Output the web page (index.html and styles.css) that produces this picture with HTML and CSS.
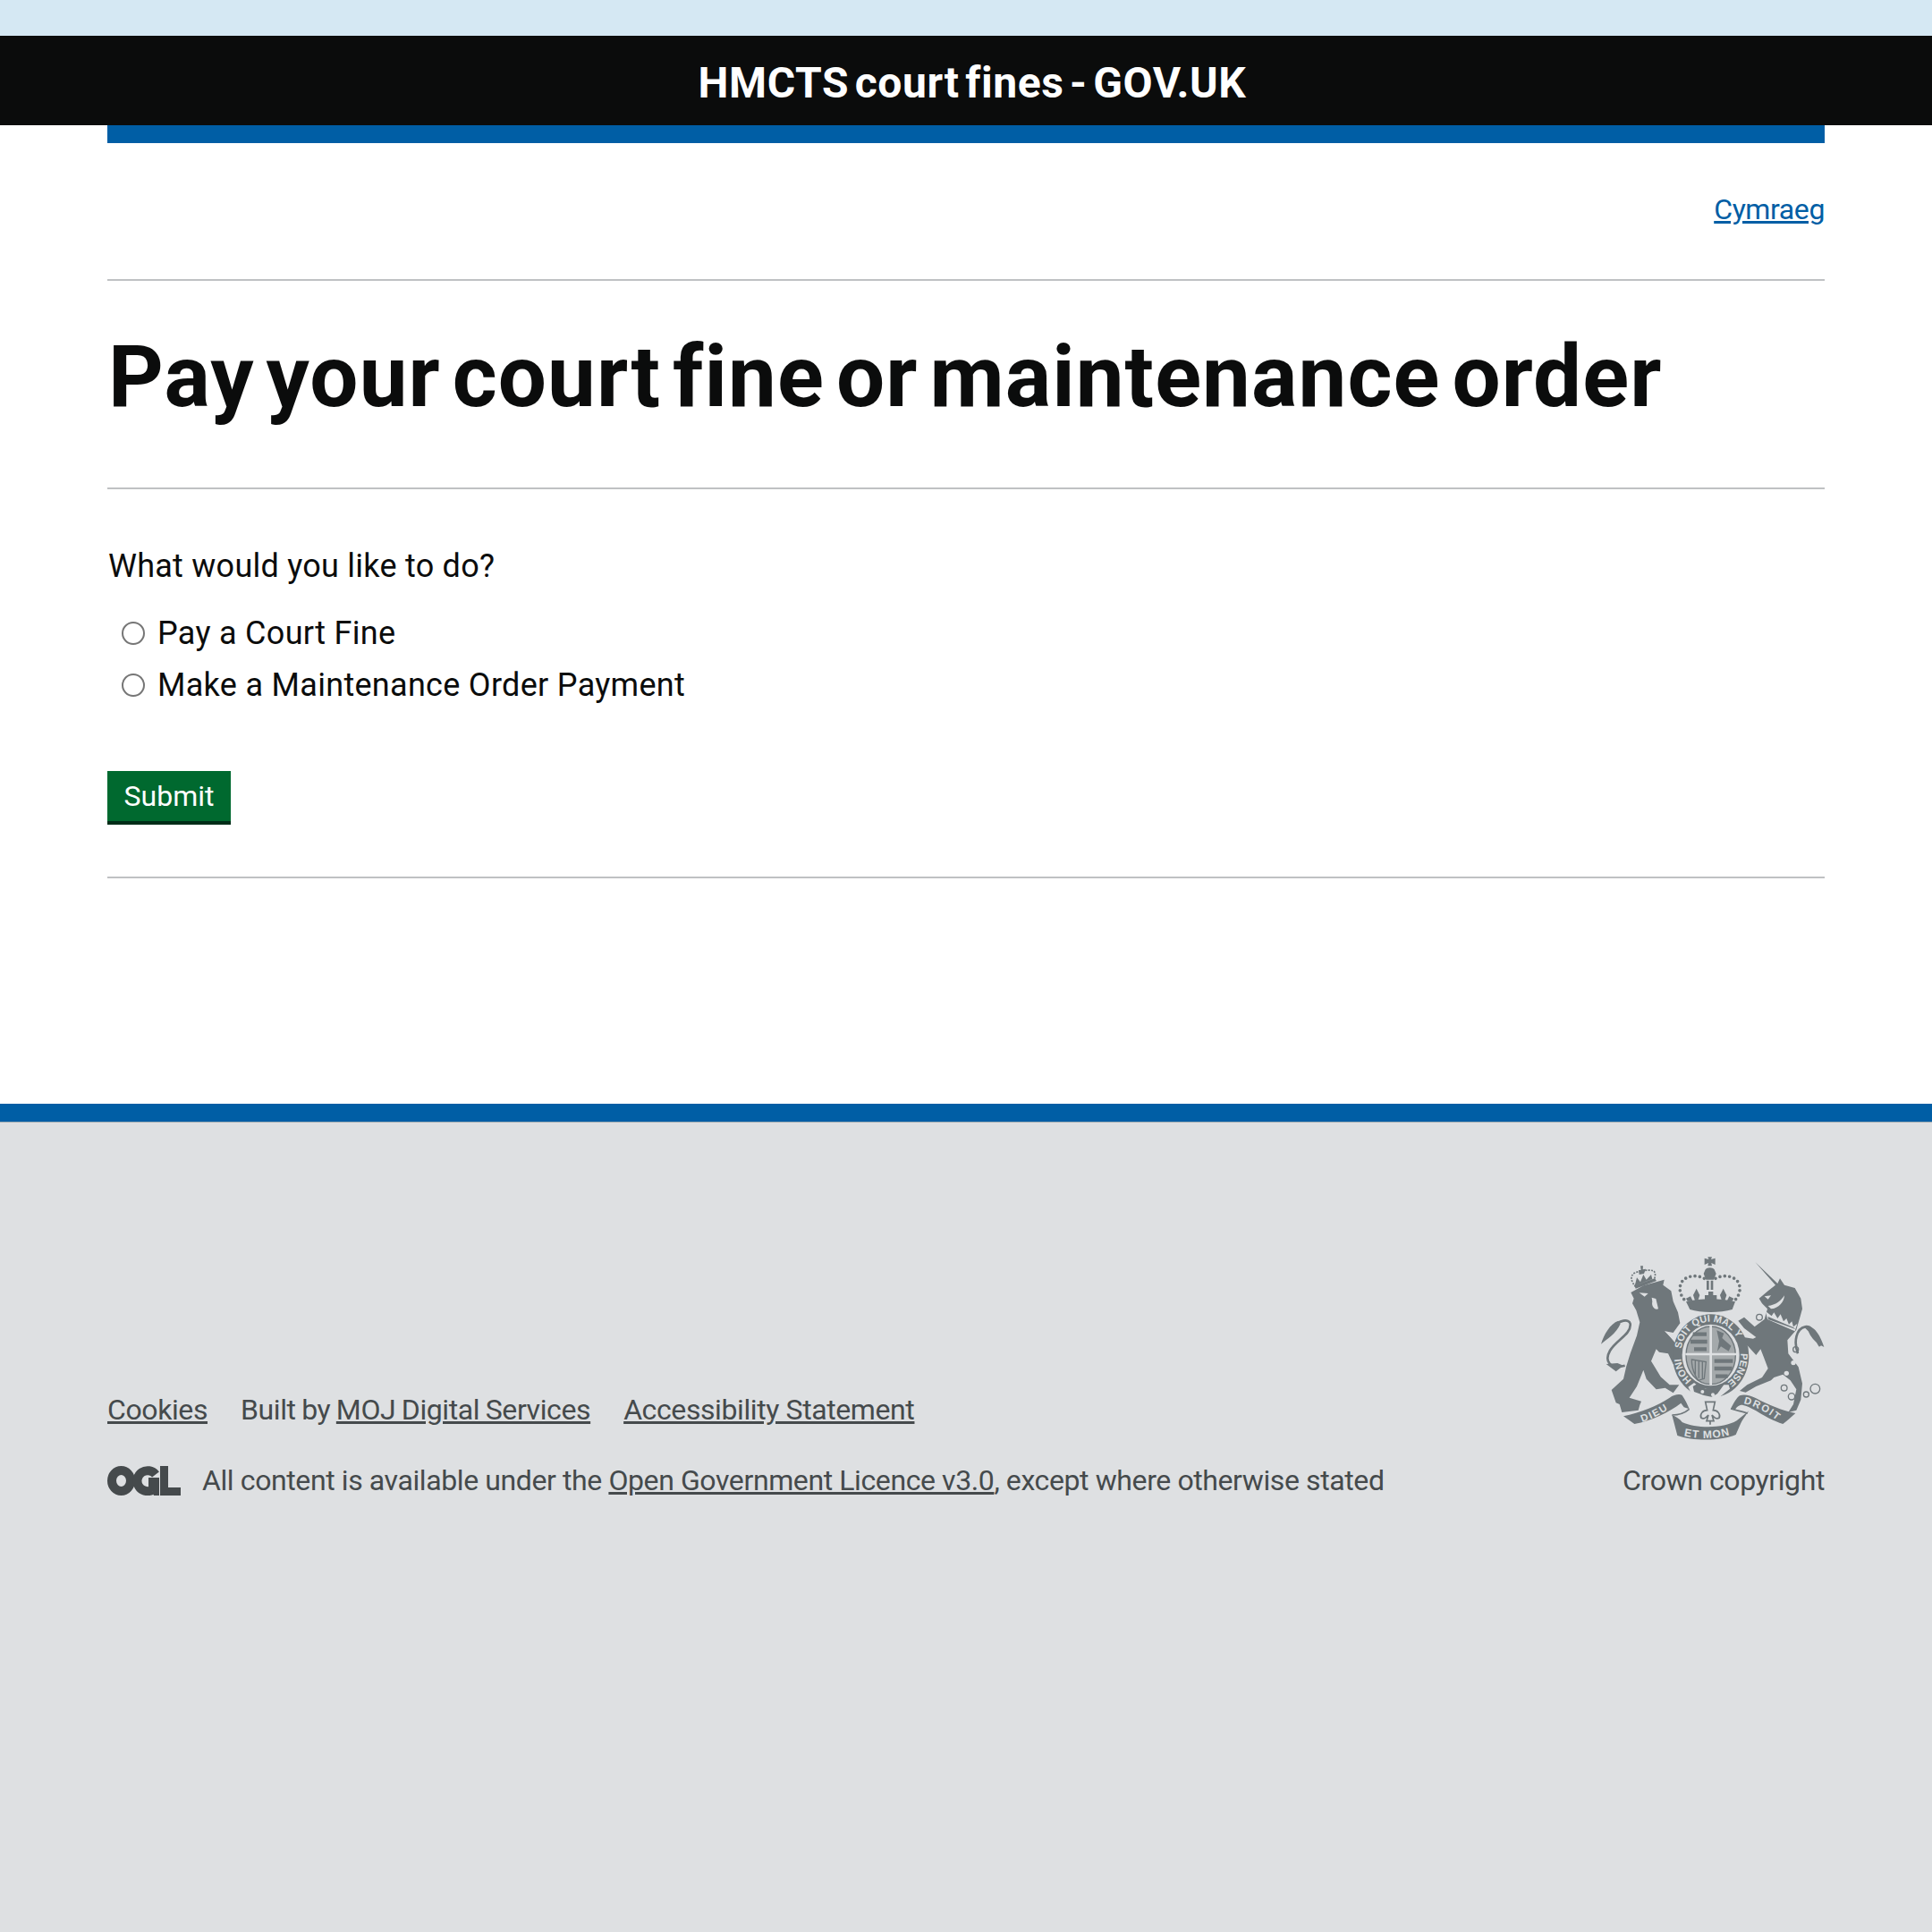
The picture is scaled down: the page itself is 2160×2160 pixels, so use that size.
FILE: index.html
```html
<!DOCTYPE html>
<html lang="en">
<head>
  <meta charset="UTF-8" />
  <title>Pay your court fine or maintenance order</title>
  <link rel="stylesheet" href="styles.css">
</head>
<body>
  <div class="top-band"></div>
  <header class="site-header">HMCTS court fines - GOV.UK</header>
  <div class="container">
    <div class="blue-bar"></div>
    <div class="lang-row"><a href="#">Cymraeg</a></div>
    <h1>Pay your court fine or maintenance order</h1>
    <form class="pay-form">
      <p class="question">What would you like to do?</p>
      <label class="option"><input type="radio" name="choice" /><span>Pay a Court Fine</span></label>
      <label class="option"><input type="radio" name="choice" /><span>Make a Maintenance Order Payment</span></label>
      <button class="btn" type="button">Submit</button>
    </form>
  </div>

  <footer class="site-footer">
    <div class="footer-inner">
      <div class="footer-meta">
        <div class="footer-links">
          <a href="#">Cookies</a>
          <span class="built-by">Built by <a href="#">MOJ Digital Services</a></span>
          <a href="#">Accessibility Statement</a>
        </div>
        <div class="licence">
          <svg class="ogl" viewBox="0 0 82 33" aria-label="OGL">
            <ellipse cx="15.5" cy="16.5" rx="10.5" ry="11.5" fill="none" stroke="#454a4c" stroke-width="10" />
            <path d="M54 9.5A11.5 11.5 0 1 0 50 27" fill="none" stroke="#454a4c" stroke-width="10" />
            <path d="M46 13H58V33H52L50 28H46Z" fill="#454a4c" />
            <path d="M59 0H68V24H82V33H59Z" fill="#454a4c" />
          </svg>
          <span>All content is available under the <a href="#">Open Government Licence v3.0</a>, except where otherwise stated</span>
        </div>
      </div>
      <div class="copyright">
        <svg class="crest" viewBox="120 75 750 615" aria-label="Royal coat of arms">
          <!-- lion -->
          <path class="c-fill" d="M220 195L262 172L332 152L328 170L355 190L362 225L378 262L385 298L362 330L335 325L378 375L372 398L394 432L380 425L378 436L368 428L362 436L345 400L315 395L305 385L288 425L320 478L350 505L382 505L362 532L335 515L305 520L272 485L262 455L240 510L215 548L255 560L250 572L245 590L190 597L182 570L170 565L155 522L195 485L205 442L218 400L240 340L250 295L238 255L225 232L230 215Z" />
          <path class="c-bg" d="M248 196L278 198L266 209ZM290 212L304 216L312 250C300 256 288 240 292 226Z" />
          <path class="c-bg-line" d="M335 325L383 373" stroke-width="3" />
          <path class="c-line" d="M200 440C150 455 130 425 150 390C170 355 222 335 218 300C214 283 180 285 160 315" stroke-width="8" />
          <path class="c-fill" d="M178 290C150 300 130 335 120 368C140 350 170 335 185 300Z" />
          <path class="c-fill" d="M137 435L175 432L195 440L170 460Z" />
          <!-- lion crown -->
          <path class="c-line" d="M236 176C222 160 215 140 232 130C248 122 280 118 295 122C305 128 302 145 296 156" stroke-width="5" stroke-dasharray="6 4" />
          <path class="c-fill" d="M232 172L300 148L306 156L236 182ZM248 135L246 120L254 120L252 106L261 106L260 118L270 116L264 132ZM235 165L240 145L252 160L262 135L272 152L288 135L292 150L232 172Z" />
          <!-- unicorn -->
          <path class="c-fill" d="M637 93L712 165L720 148L735 170L770 180L790 215L795 250L788 275L775 320L745 355L748 400L782 445L795 500L790 555L775 590L748 597L765 570L775 520L755 490L730 470L700 480L690 490L640 510L605 530L585 525L610 505L660 480L680 450L665 410L655 385L640 405L610 372L600 375L598 345L630 350L640 345L600 315L580 290L600 278L635 310L668 285L678 250L660 232L650 215L680 190L705 170Z" />
          <path class="c-bg" d="M672 258L678 285L770 325L778 300L765 310L760 292L750 302L742 282L732 292L722 268L712 282L700 262L692 274Z" />
          <path class="c-fill" d="M680 276L765 312L772 318L680 285Z" />
          <path class="c-bg" d="M668 208L690 205L680 218ZM680 240C705 238 725 222 735 205C735 225 715 250 690 250Z" />
          <path class="c-line" d="M780 400C765 360 775 315 805 310C835 305 835 350 855 375" stroke-width="8" />
          <path class="c-fill" d="M800 310C835 300 855 340 868 378C845 368 825 350 815 325Z" />
          <g class="c-line" stroke-width="4">
            <circle cx="651" cy="278" r="10" /><circle cx="773" cy="386" r="9" />
            <circle cx="734" cy="515" r="10" /><circle cx="759" cy="544" r="11" />
            <circle cx="808" cy="537" r="9" /><circle cx="838" cy="518" r="16" />
          </g>
          <circle class="c-bg" cx="765" cy="431" r="8" />
          <circle class="c-bg" cx="742" cy="466" r="8" />
          <!-- royal crown -->
          <path class="c-fill" d="M478 76H492L489 84L503 80V102L490 96L492 106H478L480 96L467 102V80L481 84ZM470 118C475 110 495 110 500 118L506 132L498 152H472L464 132Z" />
          <path class="c-fill" d="M474 155H482V186H474ZM488 155H496V186H488Z" />
          <path class="c-dots" d="M466 148C440 134 400 138 388 165C378 190 392 212 402 222" />
          <path class="c-dots" d="M504 148C530 134 570 138 582 165C592 190 578 212 568 222" />
          <path class="c-fill" d="M440 182L451 204L445 222H435L429 204ZM530 182L541 204L535 222H525L519 204ZM480 192H496V204H508V222H468V204H480ZM405 215L420 208L428 224H410ZM565 215L550 208L542 224H560Z" />
          <path class="c-fill" d="M405 226C450 214 525 214 570 226L560 252C520 264 455 264 418 252Z" />
          <!-- garter -->
          <ellipse class="c-fill" cx="488" cy="408" rx="128" ry="140" />
          <ellipse class="c-bg" cx="488" cy="405" rx="96" ry="103" />
          <path class="c-bg" d="M412 512L432 498L452 512C470 522 500 522 525 505L548 505L552 518L510 552L470 554L425 538Z" />
          <path class="c-fill" d="M428 510L442 502L470 518L505 510L535 500L510 535L490 545L465 540L432 528Z" />
          <circle class="c-bg" cx="460" cy="528" r="6" /><circle class="c-bg" cx="495" cy="538" r="6" />
          <path id="ring-top" fill="none" d="M389 384A100 106 0 0 1 587 384" />
          <path id="ring-right" fill="none" d="M588 399A100 106 0 0 1 530 504" />
          <path id="ring-left" fill="none" d="M424 489A100 106 0 0 1 389 393" />
          <text class="c-motto c-motto-ring"><textPath href="#ring-top">SOIT QUI MAL Y</textPath></text>
          <text class="c-motto c-motto-ring"><textPath href="#ring-right">PENSE</textPath></text>
          <text class="c-motto c-motto-ring"><textPath href="#ring-left">HONI</textPath></text>
          <!-- shield -->
          <ellipse class="c-shield" cx="488" cy="406" rx="83" ry="97" />
          <path class="c-bg-line" d="M488 306V506M403 402H573" stroke-width="8" />
          <g class="c-quarter">
            <path d="M428 335H474M420 360H476M432 385H474" />
            <path d="M500 425H562M500 450H560M504 476H545" />
          </g>
          <path class="c-fill" d="M508 322L532 332L526 348L556 374L548 392L522 376L510 392L516 358Z" />
          <path class="c-line" d="M424 420L472 428L466 484L446 490C432 470 424 445 424 420ZM436 424V470M448 426V482M460 428V484" stroke-width="4" />
          <!-- ribbons -->
          <path class="c-fill" d="M195 610C250 598 310 575 350 548C365 536 385 534 392 540C402 555 410 570 416 586L398 580L388 566C350 595 290 625 232 636Z" />
          <path class="c-fill" d="M358 606C372 612 385 620 392 630C440 652 530 652 575 625L616 592L610 600C600 615 592 625 588 635L572 672C530 692 430 695 376 675Z" />
          <path class="c-fill" d="M555 585C565 565 575 548 585 541C600 535 620 540 640 550C680 572 730 592 772 600C755 615 745 625 730 636C700 628 660 605 640 592C620 580 600 572 590 572C582 574 572 580 570 590Z" />
          <path class="c-line" d="M416 586C400 600 380 606 358 606M555 585C575 590 595 596 612 600" stroke-width="5" />
          <path id="rib-left" fill="none" d="M258 630C300 615 340 595 385 558" />
          <path id="rib-mid" fill="none" d="M392 674Q485 698 580 664" />
          <path id="rib-right" fill="none" d="M598 568C640 575 690 605 735 645" />
          <text class="c-motto c-motto-rib c-spaced"><textPath href="#rib-left">DIEU</textPath></text>
          <text class="c-motto c-motto-rib c-mid"><textPath href="#rib-mid" startOffset="6">ET MON</textPath></text>
          <text class="c-motto c-motto-rib c-spaced"><textPath href="#rib-right">DROIT</textPath></text>
          <!-- fleur de lis -->
          <path class="c-line" d="M470 562H502L496 590C512 590 522 605 516 616C506 622 497 612 492 606L498 626H474L480 606C475 612 466 622 456 616C450 605 460 590 476 590ZM486 626V638" stroke-width="5" />
        </svg>
        <span>Crown copyright</span>
      </div>
    </div>
  </footer>
</body>
</html>
```

FILE: styles.css
```css
:root {
  --negro: #0b0c0c;
  --azul: #005ea5;
  --gris-linea: #bfc1c3;
  --gris-pie: #dee0e2;
  --gris-texto: #454a4c;
  --crest: #6f777b;
}

* {
  box-sizing: border-box;
}

body {
  margin: 0;
  min-height: 2160px;
  display: flex;
  flex-direction: column;
  background: #ffffff;
  color: var(--negro);
  font-family: Roboto, sans-serif;
}

a {
  color: inherit;
}

.top-band {
  height: 40px;
  background: #d5e8f3;
}

.site-header {
  height: 100px;
  padding: 3px 0 0 14px;
  background: var(--negro);
  color: #ffffff;
  font-size: 48px;
  font-weight: 700;
  line-height: 100px;
  letter-spacing: 0.6px;
  word-spacing: -6px;
  text-align: center;
}

.container {
  width: 1920px;
  margin: 0 auto;
  height: 1094px;
}

.blue-bar {
  height: 20px;
  background: var(--azul);
}

.lang-row {
  height: 154px;
  padding-top: 54px;
  border-bottom: 2px solid var(--gris-linea);
  font-size: 32px;
  line-height: 40px;
  letter-spacing: -0.4px;
  text-align: right;
}

.lang-row a {
  color: var(--azul);
}

h1 {
  height: 233px;
  margin: 0;
  padding: 52px 0 0 1px;
  border-bottom: 2px solid var(--gris-linea);
  font-size: 96px;
  line-height: 110px;
  font-weight: 700;
  letter-spacing: 1.1px;
  word-spacing: -12px;
  white-space: nowrap;
}

.pay-form {
  display: flex;
  flex-direction: column;
  align-items: flex-start;
  height: 435px;
  padding-top: 62px;
  border-bottom: 2px solid var(--gris-linea);
}

.question {
  margin: 0 0 22px 1px;
  font-size: 36px;
  line-height: 48px;
  letter-spacing: 0.25px;
}

.option {
  display: flex;
  align-items: center;
  gap: 14px;
  height: 58px;
  padding-left: 16px;
  font-size: 36px;
  letter-spacing: 0.3px;
}

.option input {
  appearance: none;
  width: 26px;
  height: 26px;
  margin: 0;
  border: 2px solid #767676;
  border-radius: 50%;
  background: #ffffff;
}

.btn {
  width: 138px;
  height: 60px;
  margin-top: 67px;
  border: none;
  border-bottom: 4px solid #002d18;
  background: #00692f;
  color: #ffffff;
  font-family: inherit;
  font-size: 32px;
  padding: 0;
}

.site-footer {
  flex: 1;
  border-top: 20px solid var(--azul);
  box-shadow: inset 0 1px 0 #a1acb2;
  background: var(--gris-pie);
  color: var(--gris-texto);
  font-size: 32px;
  letter-spacing: -0.4px;
}

.footer-inner {
  display: flex;
  justify-content: space-between;
  align-items: flex-end;
  width: 1920px;
  margin: 0 auto;
  padding-top: 151px;
}

.footer-links {
  display: flex;
  gap: 37px;
  line-height: 40px;
  white-space: nowrap;
}

.built-by {
  word-spacing: -1px;
}

.licence {
  display: flex;
  align-items: center;
  gap: 24px;
  margin-top: 39px;
  line-height: 40px;
  white-space: nowrap;
}

.ogl {
  width: 82px;
  height: 33px;
}

.copyright {
  display: flex;
  flex-direction: column;
  align-items: flex-end;
  gap: 25px;
  line-height: 40px;
}

.crest {
  display: block;
  width: 250px;
  height: 205px;
}

.c-fill {
  fill: var(--crest);
}

.c-bg {
  fill: var(--gris-pie);
}

.c-line {
  fill: none;
  stroke: var(--crest);
}

.c-bg-line {
  fill: none;
  stroke: var(--gris-pie);
}

.c-dots {
  fill: none;
  stroke: var(--crest);
  stroke-width: 11;
  stroke-linecap: round;
  stroke-dasharray: 0 16;
}

.c-shield {
  fill: #a4a9ab;
  stroke: var(--crest);
  stroke-width: 4;
}

.c-quarter {
  fill: none;
  stroke: var(--crest);
  stroke-width: 13;
}

.c-motto {
  fill: var(--gris-pie);
  font-family: "Liberation Sans", sans-serif;
  font-weight: 700;
  letter-spacing: 0;
}

.c-motto-ring {
  font-size: 33px;
}

.c-motto-rib {
  font-size: 34px;
}

.c-spaced {
  letter-spacing: 5px;
}

.c-mid {
  font-size: 36px;
  letter-spacing: 3px;
}
```
